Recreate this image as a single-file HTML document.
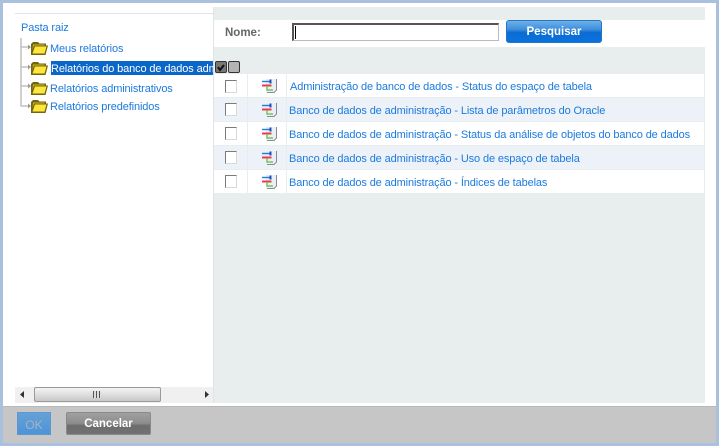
<!DOCTYPE html>
<html><head><meta charset="utf-8">
<style>
html,body{margin:0;padding:0;width:719px;height:446px;overflow:hidden;background:#fff}
body{position:relative;font-family:"Liberation Sans",sans-serif;font-size:11px;letter-spacing:-.125px}
div,svg{position:absolute;box-sizing:border-box}
.t{white-space:nowrap;color:#1c7ade;line-height:16px}
.b{font-weight:bold;font-size:11.5px;letter-spacing:0}
.row{left:214px;width:490px;height:23px}
.cb{left:225px;width:12px;height:13px;background:#fff;border:1px solid #7a7a7a;border-right-color:#d8d8d8;border-bottom-color:#d8d8d8}
.v{top:74px;width:1px;height:119px;background:#e8eded}
</style></head><body>
<!-- frame -->
<div style="left:0;top:0;width:719px;height:3px;background:#a9c0de"></div>
<div style="left:0;top:0;width:3px;height:446px;background:#a9c0de"></div>
<div style="left:716px;top:0;width:3px;height:446px;background:#a9c0de"></div>
<div style="left:0;top:443px;width:719px;height:3px;background:#a9c0de"></div>
<!-- footer -->
<div style="left:3px;top:406px;width:713px;height:37px;background:#c6c6c6;border-top:1px solid #b8b8b8"></div>
<!-- tree -->
<div style="left:15px;top:13px;width:198px;height:1px;background:#e2e4e4"></div>
<div style="left:213px;top:7px;width:1px;height:396px;background:#e0e4e4"></div>
<div class="t" style="left:21px;top:20px">Pasta raiz</div>
<svg style="left:18px;top:36px" width="16" height="74"><path d="M3 2V70H11M3 11H11M3 31H11M3 50H11" fill="none" stroke="#c0c0c0" stroke-width="1.5"/><path d="M10 8.500l3 2.500-3 2.500zM10 28.500l3 2.500-3 2.500zM10 47.500l3 2.500-3 2.500zM10 67.500l3 2.500-3 2.500z" fill="#9a9a9a"/></svg>
<svg width="0" height="0" style="left:0;top:0"><defs><g id="f"><path d="M0 2L2 0H7L8.500 1.500H15V3.500H17L14.500 13H0z" fill="#75650c"/><path d="M1.500 11.500L4 4.500H15.500L13.500 11.500z" fill="#ffe63c"/><path d="M2 2.500H13.500V3.500H3L1.500 8z" fill="#c9b62a"/></g></defs></svg>
<svg style="left:31px;top:42px" width="18" height="13"><use href="#f"/></svg>
<svg style="left:31px;top:62px" width="18" height="13"><use href="#f"/></svg>
<svg style="left:31px;top:82px" width="18" height="13"><use href="#f"/></svg>
<svg style="left:31px;top:100px" width="18" height="13"><use href="#f"/></svg>
<div class="t" style="left:50px;top:41px">Meus relatórios</div>
<div style="left:51px;top:61px;width:162px;height:14px;background:#0a66c8;overflow:hidden"><div class="t" style="left:0;top:0;color:#fff">Relatórios do banco de dados administrativos</div></div>
<div class="t" style="left:50px;top:81px">Relatórios administrativos</div>
<div class="t" style="left:50px;top:99px">Relatórios predefinidos</div>
<!-- scrollbar -->
<div style="left:15px;top:387px;width:198px;height:16px;background:#f0f0f0"></div>
<svg style="left:15px;top:387px" width="198" height="16"><path d="M9 4v7l-4-3.500zM190 4v7l4-3.500z" fill="#333"/></svg>
<div style="left:34px;top:387px;width:127px;height:15px;border:1px solid #9a9a9a;border-radius:2px;background:linear-gradient(#f4f4f4,#c8c8c8)"></div>
<div style="left:93px;top:391px;width:8px;height:7px;background:repeating-linear-gradient(90deg,#555 0 1px,#ddd 1px 3px)"></div>
<!-- right panel -->
<div style="left:214px;top:7px;width:491px;height:396px;background:#e8eded"></div>
<div style="left:214px;top:20px;width:491px;height:27px;background:#fff"></div>
<div class="t b" style="left:225px;top:25px;color:#666">Nome:</div>
<div style="left:292px;top:23px;width:207px;height:18px;background:#fff;border:1px solid #bbb;border-top:2px solid #555;border-left:2px solid #555"></div>
<div style="left:295px;top:26px;width:1px;height:13px;background:#000"></div>
<div style="left:506px;top:20px;width:96px;height:23px;border-radius:3px;border:1px solid #1f78c8;background:linear-gradient(#6fb0e8 0,#3f8fdc 40%,#0a6cd2 55%,#0a72de 100%)"></div>
<div class="t b" style="left:506px;top:24px;width:96px;text-align:center;color:#fff">Pesquisar</div>
<!-- header checks -->
<div style="left:215px;top:61px;width:12px;height:12px;background:#777;border:1px solid #333;border-radius:2px"></div>
<svg style="left:215px;top:61px" width="12" height="12"><path d="M3 6l2 3 4-5" fill="none" stroke="#111" stroke-width="2"/></svg>
<div style="left:228px;top:61px;width:12px;height:12px;background:#b4b4b4;border:1px solid #333;border-radius:2px"></div>
<!-- rows -->
<div class="row" style="top:74px;background:#fff"></div>
<div class="row" style="top:98px;background:#edf2f9"></div>
<div class="row" style="top:122px;background:#fff"></div>
<div class="row" style="top:146px;background:#edf2f9"></div>
<div class="row" style="top:170px;background:#fff"></div>
<div class="v" style="left:247px"></div>
<div class="v" style="left:286px"></div>
<div class="cb" style="top:80px"></div>
<div class="cb" style="top:103px"></div>
<div class="cb" style="top:127px"></div>
<div class="cb" style="top:151px"></div>
<div class="cb" style="top:175px"></div>
<svg width="0" height="0" style="left:0;top:0"><defs><g id="i"><path d="M4 1H14V11.500L11.500 14H4z" fill="#eceef6"/><path d="M14.500 1V12L12 14.500H5" fill="none" stroke="#8a8a94"/><path d="M0 3.500H9" stroke="#2a7ee0" stroke-width="1.500"/><path d="M8.500 1.500V5.500" stroke="#1a50b0" stroke-width="2"/><path d="M0 7.500H9.500" stroke="#ec3a46" stroke-width="2"/><path d="M5 8V12H11" fill="none" stroke="#6ec85a" stroke-width="1.500"/></g></defs></svg>
<svg style="left:262px;top:78px" width="16" height="15"><use href="#i"/></svg>
<svg style="left:262px;top:102px" width="16" height="15"><use href="#i"/></svg>
<svg style="left:262px;top:126px" width="16" height="15"><use href="#i"/></svg>
<svg style="left:262px;top:150px" width="16" height="15"><use href="#i"/></svg>
<svg style="left:262px;top:174px" width="16" height="15"><use href="#i"/></svg>
<div class="t" style="left:290px;top:79px">Administração de banco de dados - Status do espaço de tabela</div>
<div class="t" style="left:289px;top:103px">Banco de dados de administração - Lista de parâmetros do Oracle</div>
<div class="t" style="left:289px;top:127px">Banco de dados de administração - Status da análise de objetos do banco de dados</div>
<div class="t" style="left:289px;top:151px">Banco de dados de administração - Uso de espaço de tabela</div>
<div class="t" style="left:289px;top:175px">Banco de dados de administração - Índices de tabelas</div>
<!-- buttons -->
<div style="left:17px;top:412px;width:34px;height:23px;background:linear-gradient(#66a0d6,#5a9ad6 50%,#4e94d8);border:1px solid #5a98d0"></div>
<div class="t" style="left:17px;top:417px;width:34px;text-align:center;color:#a4b4c4;font-size:12px;letter-spacing:0">OK</div>
<div style="left:66px;top:412px;width:85px;height:23px;border-radius:2px;border:1px solid #8a8a8a;background:linear-gradient(#a0a0a0 0,#8c8c8c 50%,#6c6c6c 60%,#727272 100%)"></div>
<div class="t b" style="left:66px;top:416px;width:85px;text-align:center;color:#fff">Cancelar</div>
</body></html>
